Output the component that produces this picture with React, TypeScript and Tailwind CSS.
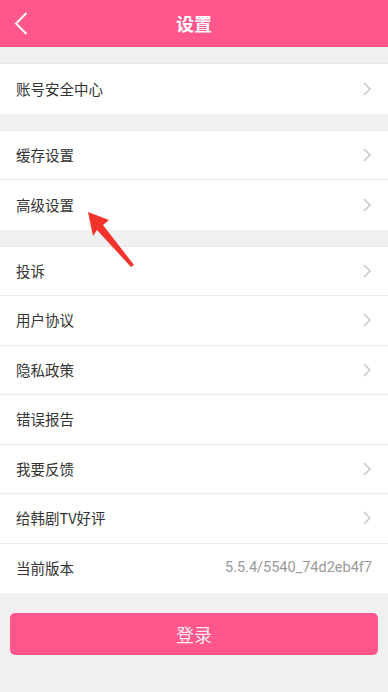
const font = { fontFamily: '"Noto Sans CJK SC", Roboto, sans-serif' };

function Chevron() {
  return (
    <svg width="8" height="14" viewBox="0 0 8 14" className="mr-[1px]">
      <polyline points="1,1 7,7 1,13" fill="none" stroke="#c4c4c4" strokeWidth="1.4" />
    </svg>
  );
}

function Row({ label, value, arrow = true, last = false }: { label: string; value?: string; arrow?: boolean; last?: boolean }) {
  return (
    <div className={`flex h-[49.5px] items-center justify-between bg-white pl-4 pr-4 ${last ? '' : 'border-b border-[#ececec]'}`}>
      <span className="text-[14.5px] text-[#333]">{label}</span>
      {value && <span className="text-[14.5px] text-[#9a9a9a]" style={{ fontFamily: 'Roboto, sans-serif' }}>{value}</span>}
      {arrow && <Chevron />}
    </div>
  );
}

export default function App() {
  return (
    <div className="relative flex h-[692px] w-[388px] flex-col bg-[#f0f0f0]" style={font}>
      <div className="relative flex h-[47px] shrink-0 items-center justify-center bg-[#ff568b]">
        <svg className="absolute left-[14px] top-[12px]" width="14" height="23" viewBox="0 0 14 23">
          <polyline points="12.5,1 2,11.5 12.5,22" fill="none" stroke="#fff" strokeWidth="2" />
        </svg>
        <span className="text-[18px] font-bold text-white">设置</span>
      </div>

      <div className="mt-[16px] border-t border-[#e8e8e8]">
        <Row label="账号安全中心" last />
      </div>

      <div className="mt-[16px] border-t border-[#e8e8e8]">
        <Row label="缓存设置" />
        <Row label="高级设置" last />
      </div>

      <div className="mt-[16px] border-t border-[#e8e8e8]">
        <Row label="投诉" />
        <Row label="用户协议" />
        <Row label="隐私政策" />
        <Row label="错误报告" arrow={false} />
        <Row label="我要反馈" />
        <Row label="给韩剧TV好评" />
        <Row label="当前版本" value="5.5.4/5540_74d2eb4f7" arrow={false} last />
      </div>

      <div className="px-[10px] pt-[20px]">
        <button className="flex h-[42px] w-full items-center justify-center rounded-[5px] bg-[#ff568b] text-[18px] text-[#fde8f0]">
          登录
        </button>
      </div>

      <svg className="pointer-events-none absolute left-0 top-0" width="388" height="692">
        <polygon points="88,212 109,220 103,225 134,265 131,267 97,230 93,236" fill="#f1332c" />
      </svg>
    </div>
  );
}
